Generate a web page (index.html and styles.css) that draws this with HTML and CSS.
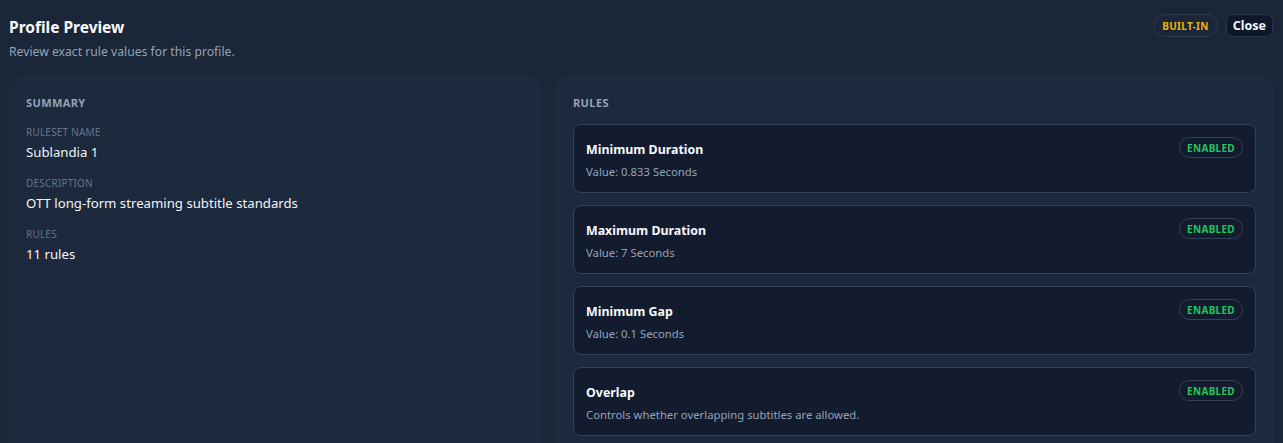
FILE: index.html
```html
<!DOCTYPE html>
<html>
<head>
<meta charset="utf-8">
<link rel="stylesheet" href="styles.css">
</head>
<body>
<div class="page">
  <header class="header">
    <div class="head-text">
      <h1 class="title">Profile Preview</h1>
      <p class="subtitle">Review exact rule values for this profile.</p>
    </div>
    <div class="head-actions">
      <span class="pill pill-builtin">BUILT-IN</span>
      <button class="btn-close">Close</button>
    </div>
  </header>
  <div class="columns">
    <section class="panel">
      <h2 class="panel-label">SUMMARY</h2>
      <div class="field">
        <div class="field-label">RULESET NAME</div>
        <div class="field-value">Sublandia 1</div>
      </div>
      <div class="field">
        <div class="field-label">DESCRIPTION</div>
        <div class="field-value">OTT long-form streaming subtitle standards</div>
      </div>
      <div class="field">
        <div class="field-label">RULES</div>
        <div class="field-value">11 rules</div>
      </div>
    </section>
    <section class="panel">
      <h2 class="panel-label">RULES</h2>
      <div class="rule-list">
        <div class="rule">
          <div class="rule-head">
            <span class="rule-name">Minimum Duration</span>
            <span class="pill pill-enabled">ENABLED</span>
          </div>
          <div class="rule-desc">Value: 0.833 Seconds</div>
        </div>
        <div class="rule">
          <div class="rule-head">
            <span class="rule-name">Maximum Duration</span>
            <span class="pill pill-enabled">ENABLED</span>
          </div>
          <div class="rule-desc">Value: 7 Seconds</div>
        </div>
        <div class="rule">
          <div class="rule-head">
            <span class="rule-name">Minimum Gap</span>
            <span class="pill pill-enabled">ENABLED</span>
          </div>
          <div class="rule-desc">Value: 0.1 Seconds</div>
        </div>
        <div class="rule">
          <div class="rule-head">
            <span class="rule-name">Overlap</span>
            <span class="pill pill-enabled">ENABLED</span>
          </div>
          <div class="rule-desc">Controls whether overlapping subtitles are allowed.</div>
        </div>
      </div>
    </section>
  </div>
</div>
</body>
</html>
```
FILE: styles.css
```css
* { box-sizing: border-box; }
html, body {
  margin: 0;
  padding: 0;
  height: 100%;
  overflow: hidden;
}
body {
  background: #1b2639;
  font-family: "Noto Sans", "Open Sans", sans-serif;
  color: #f1f5f9;
}
.page {
  padding: 14px 10px 0 9px;
}
.header {
  display: flex;
  justify-content: space-between;
  align-items: flex-start;
}
.title {
  margin: 2px 0 0 0;
  font-size: 15.5px;
  font-weight: 700;
  line-height: 22px;
  color: #f8fafc;
}
.subtitle {
  margin: 5px 0 0 0;
  font-size: 12.2px;
  line-height: 17px;
  color: #94a3b8;
}
.head-actions {
  display: flex;
  align-items: center;
  gap: 8px;
}
.pill {
  display: inline-flex;
  align-items: center;
  justify-content: center;
  border-radius: 999px;
  font-size: 10px;
  font-weight: 700;
  letter-spacing: 0.3px;
}
.pill-builtin {
  height: 23px;
  padding: 0 8px;
  color: #eab308;
  border: 1px solid #2e3a4e;
}
.btn-close {
  height: 23px;
  padding: 0 6px;
  background: #0f172a;
  color: #f1f5f9;
  border: 1px solid #2b3647;
  border-radius: 7px;
  font-family: inherit;
  font-size: 12.5px;
  font-weight: 700;
}
.columns {
  display: grid;
  grid-template-columns: 531px 1fr;
  gap: 16px;
  margin-top: 17px;
}
.panel {
  background: #1d293c;
  border: 1px solid #212d40;
  border-radius: 12px;
  padding: 17px 16px 16px 16px;
  height: 400px;
}
.panel-label {
  margin: 0 0 14px 0;
  font-size: 11px;
  font-weight: 700;
  letter-spacing: 0.4px;
  line-height: 16px;
  color: #94a3b8;
}
.field {
  margin-bottom: 14px;
}
.field-label {
  font-size: 10px;
  line-height: 14px;
  letter-spacing: 0.2px;
  color: #64748b;
}
.field-value {
  margin-top: 3px;
  font-size: 13.2px;
  line-height: 20px;
  color: #f1f5f9;
}
.rule-list {
  display: flex;
  flex-direction: column;
  gap: 12px;
  margin-top: -1px;
}
.rule {
  background: #131b2f;
  border: 1px solid #334155;
  border-radius: 8px;
  padding: 12px 12px 12px 12px;
  height: 69px;
}
.rule-head {
  display: flex;
  justify-content: space-between;
  align-items: center;
}
.rule-name {
  font-size: 12.4px;
  font-weight: 700;
  color: #f8fafc;
  margin-top: 3px;
}
.pill-enabled {
  height: 21px;
  padding: 0 7px;
  color: #22c55e;
  border: 1px solid #334155;
}
.rule-desc {
  margin-top: 6px;
  font-size: 11.3px;
  line-height: 16px;
  color: #94a3b8;
}
```
